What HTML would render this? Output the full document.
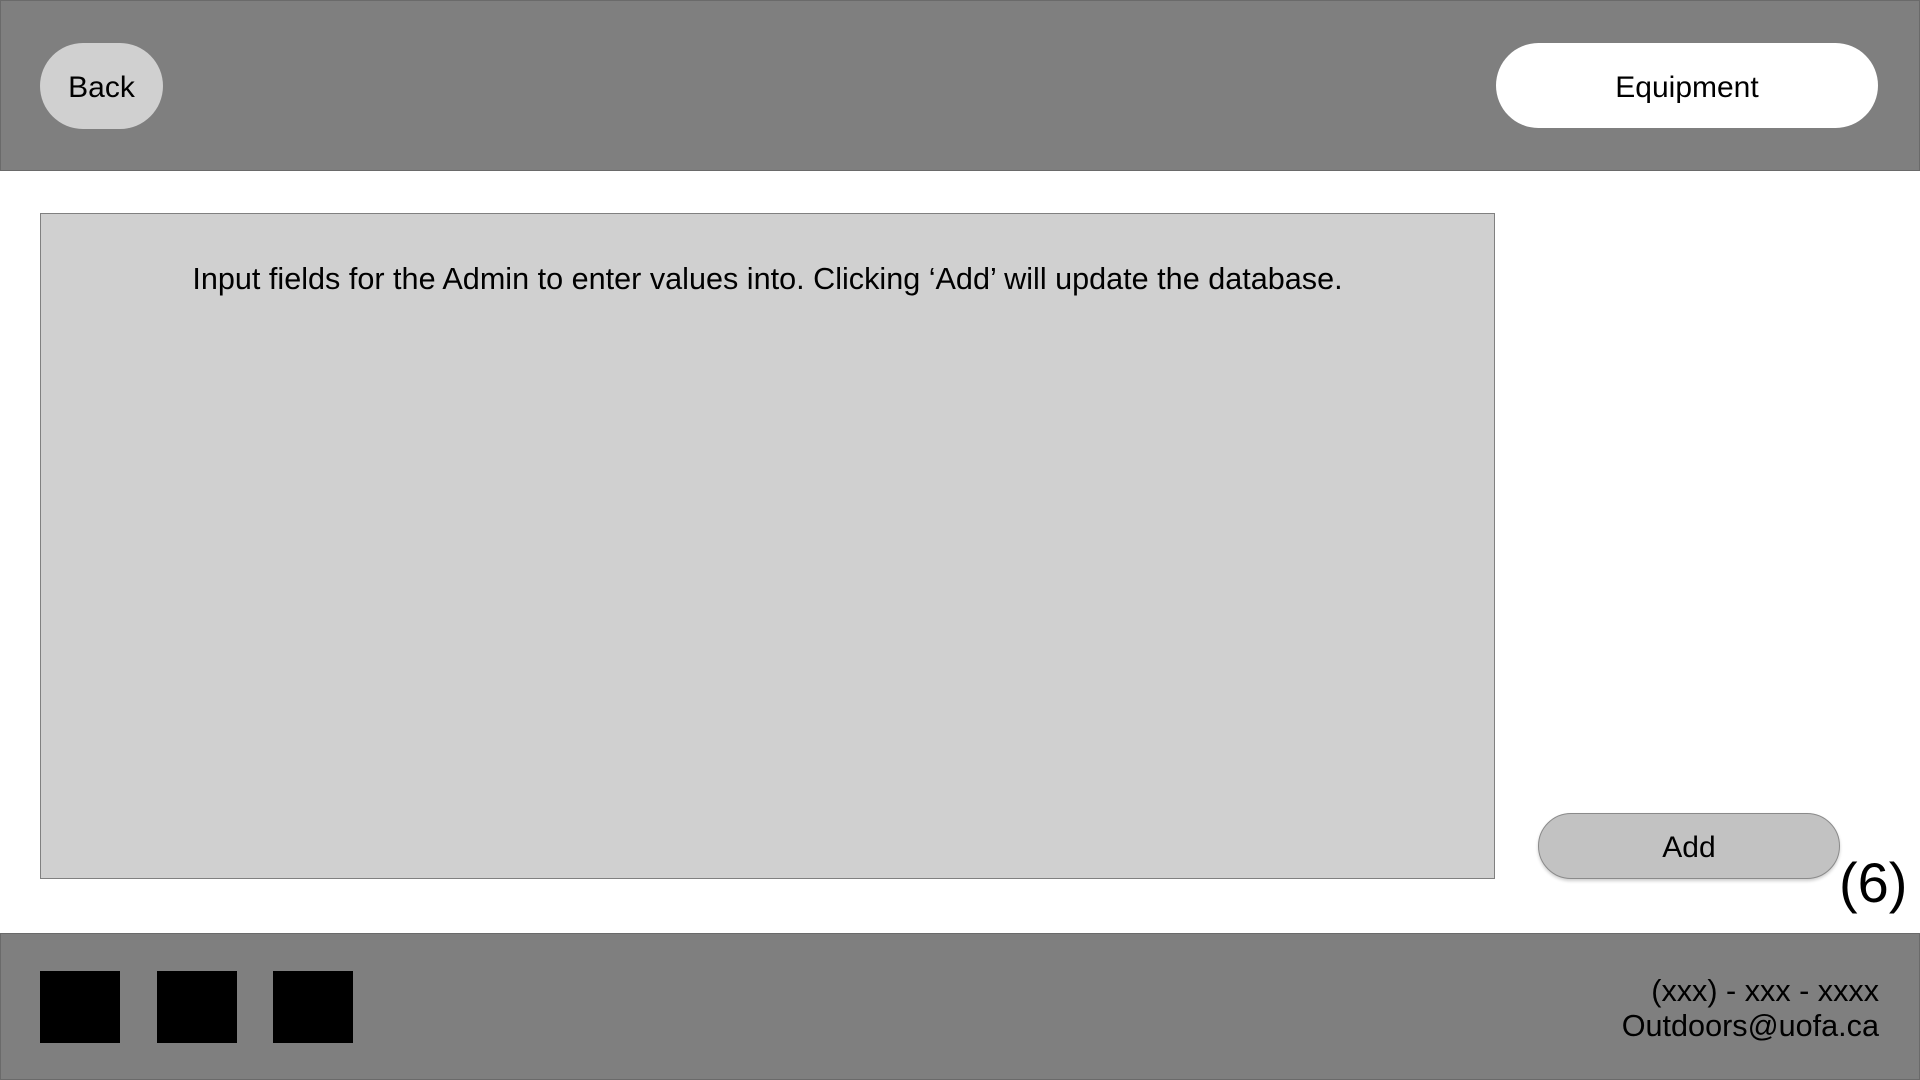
<!DOCTYPE html>
<html><head><style>
*{margin:0;padding:0;box-sizing:border-box}
body{width:1920px;height:1080px;position:relative;background:#fff;font-family:"Liberation Sans",sans-serif;color:#000;overflow:hidden}
.hdr{position:absolute;left:0;top:0;width:1920px;height:171px;background:#7f7f7f;border:1px solid #6a6a6a}
.btn{position:absolute;display:flex;align-items:center;justify-content:center;font-size:30px;border-radius:40px;padding-top:4px}
.ftr{position:absolute;left:0;top:933px;width:1920px;height:147px;background:#7f7f7f;border:1px solid #6a6a6a}
.sq{position:absolute;top:971px;width:80px;height:72px;background:#000}
</style></head><body>
<div class="hdr"></div>
<div class="btn" style="left:40px;top:43px;width:123px;height:86px;background:#d0d0d0;border-radius:43px">Back</div>
<div class="btn" style="left:1496px;top:43px;width:382px;height:85px;background:#fff;border-radius:43px">Equipment</div>
<div style="position:absolute;left:40px;top:213px;width:1455px;height:666px;background:#d0d0d0;border:1px solid #808080"></div>
<div style="position:absolute;left:40px;top:262px;width:1455px;text-align:center;font-size:30.6px">Input fields for the Admin to enter values into. Clicking ‘Add’ will update the database.</div>
<div class="btn" style="left:1538px;top:813px;width:302px;height:66px;background:#c2c2c2;border:1px solid #8a8a8a;border-radius:33px;box-shadow:0 2px 3px rgba(0,0,0,.2)">Add</div>
<div style="position:absolute;left:1839px;top:850px;font-size:56px">(6)</div>
<div class="ftr"></div>
<div class="sq" style="left:40px"></div>
<div class="sq" style="left:157px"></div>
<div class="sq" style="left:273px"></div>
<div style="position:absolute;right:41px;top:974px;text-align:right;font-size:30.6px;line-height:35px">(xxx) - xxx - xxxx<br>Outdoors@uofa.ca</div>
</body></html>
